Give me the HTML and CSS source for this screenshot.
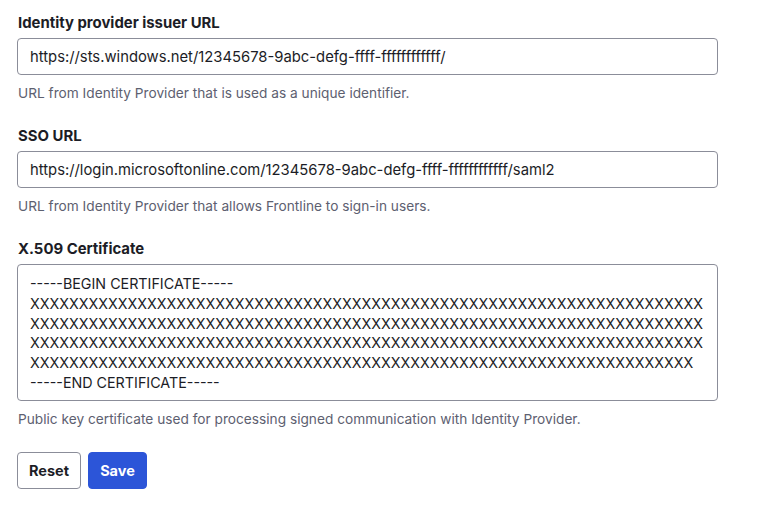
FILE: index.html
```html
<!DOCTYPE html>
<html>
<head>
<meta charset="utf-8">
<link rel="stylesheet" href="styles.css">
</head>
<body>
<form class="form">
  <div class="field">
    <label class="label">Identity provider issuer URL</label>
    <input class="input" type="text" value="https://sts.windows.net/12345678-9abc-defg-ffff-ffffffffffff/">
    <p class="help">URL from Identity Provider that is used as a unique identifier.</p>
  </div>
  <div class="field">
    <label class="label">SSO URL</label>
    <input class="input" type="text" value="https://login.microsoftonline.com/12345678-9abc-defg-ffff-ffffffffffff/saml2">
    <p class="help">URL from Identity Provider that allows Frontline to sign-in users.</p>
  </div>
  <div class="field">
    <label class="label">X.509 Certificate</label>
    <textarea class="textarea" rows="6">-----BEGIN CERTIFICATE-----
XXXXXXXXXXXXXXXXXXXXXXXXXXXXXXXXXXXXXXXXXXXXXXXXXXXXXXXXXXXXXXXXXXXXX
XXXXXXXXXXXXXXXXXXXXXXXXXXXXXXXXXXXXXXXXXXXXXXXXXXXXXXXXXXXXXXXXXXXXX
XXXXXXXXXXXXXXXXXXXXXXXXXXXXXXXXXXXXXXXXXXXXXXXXXXXXXXXXXXXXXXXXXXXXX
XXXXXXXXXXXXXXXXXXXXXXXXXXXXXXXXXXXXXXXXXXXXXXXXXXXXXXXXXXXXXXXXXXXX
-----END CERTIFICATE-----</textarea>
    <p class="help">Public key certificate used for processing signed communication with Identity Provider.</p>
  </div>
  <div class="actions">
    <button type="button" class="btn btn-secondary">Reset</button>
    <button type="button" class="btn btn-primary">Save</button>
  </div>
</form>
</body>
</html>
```
FILE: styles.css
```css
* { box-sizing: border-box; }
html, body { margin: 0; background: #fff; }
body {
  font-family: Inter, "Noto Sans", sans-serif;
  color: #1c1d26;
  padding: 13px 43px 0 17px;
}
.form { display: flex; flex-direction: column; width: 701px; }
.field { display: flex; flex-direction: column; margin-bottom: 24px; }
.label {
  font-size: 14.9px;
  font-weight: 700;
  line-height: 18px;
  padding: 1px 0 0 1px;
  margin-bottom: 6px;
}
.input, .textarea {
  width: 100%;
  border: 1px solid #8b8d99;
  border-radius: 4px;
  font-family: Inter, "Noto Sans", sans-serif;
  font-size: 14.8px;
  color: #1c1d26;
  background: #fff;
  outline: none;
}
.input {
  height: 37px;
  padding: 0 12px;
}
.textarea {
  height: 137px;
  padding: 9px 12px;
  font-size: 14.3px;
  line-height: 19.8px;
  resize: none;
  white-space: pre;
  overflow: hidden;
}
.help {
  margin: 9px 0 0 1px;
  font-size: 13.7px;
  line-height: 18px;
  color: #5d6070;
}
.actions { display: flex; gap: 7px; }
.btn {
  height: 37px;
  border-radius: 4px;
  font-family: Inter, "Noto Sans", sans-serif;
  font-size: 14.5px;
  font-weight: 700;
  padding: 0;
  cursor: pointer;
}
.btn-secondary { background: #fff; border: 1px solid #8b8d99; color: #1c1d26; width: 64px; }
.btn-primary { background: #2c55d8; border: 1px solid #2c55d8; color: #fff; width: 59px; }
```
